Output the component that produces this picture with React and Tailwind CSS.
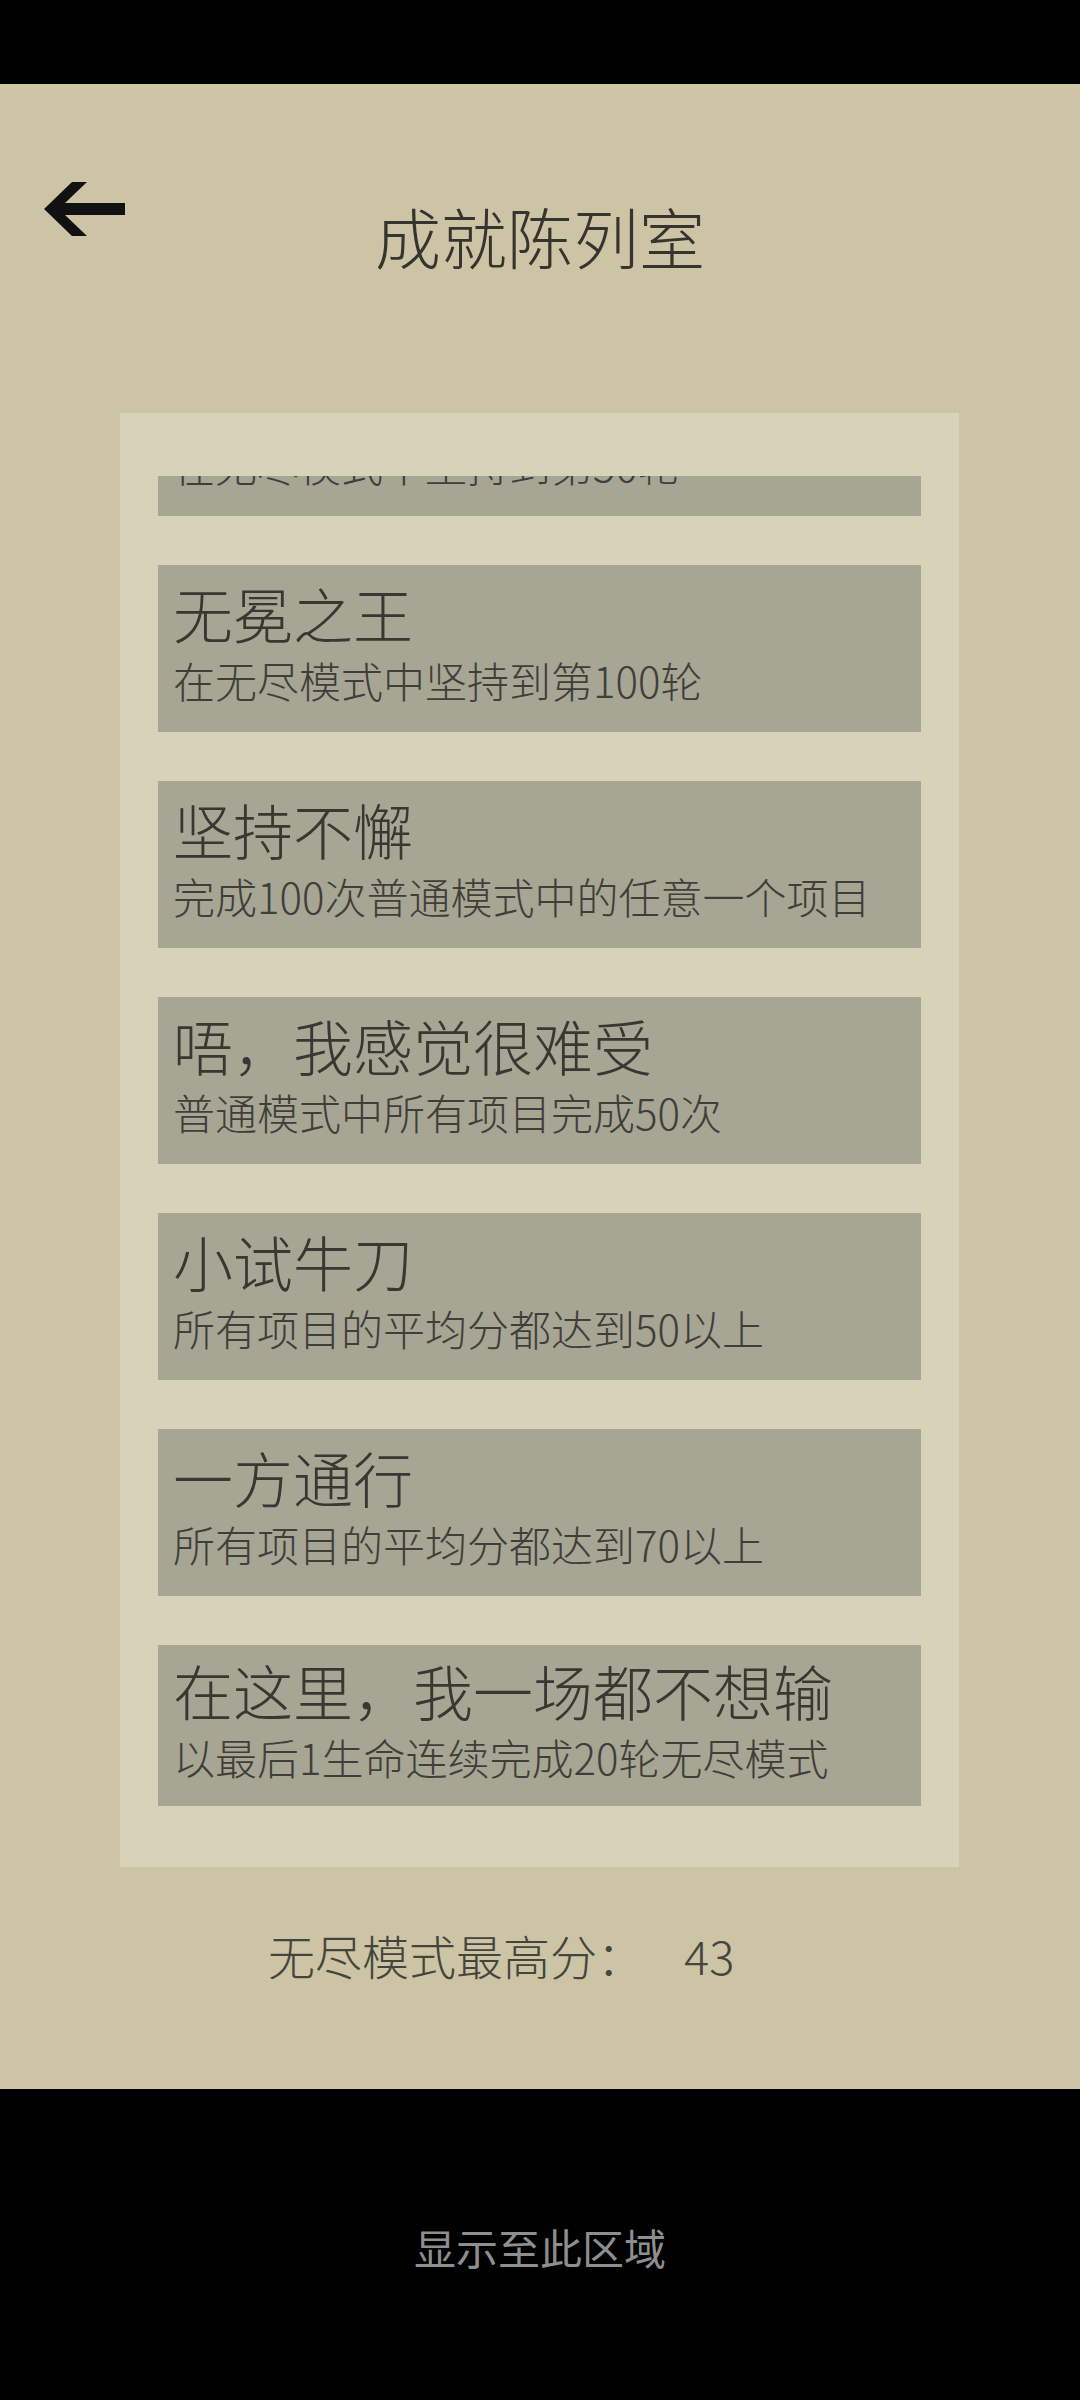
import React from 'react';

const achievements = [
  { title: '坚持到底', desc: '在无尽模式中坚持到第50轮' },
  { title: '无冕之王', desc: '在无尽模式中坚持到第100轮' },
  { title: '坚持不懈', desc: '完成100次普通模式中的任意一个项目' },
  { title: '唔，我感觉很难受', desc: '普通模式中所有项目完成50次' },
  { title: '小试牛刀', desc: '所有项目的平均分都达到50以上' },
  { title: '一方通行', desc: '所有项目的平均分都达到70以上' },
  { title: '在这里，我一场都不想输', desc: '以最后1生命连续完成20轮无尽模式' },
];

const font = { fontFamily: '"Noto Sans CJK SC", "Noto Sans", sans-serif' };

function BackArrow() {
  return (
    <svg width="82" height="54" viewBox="0 0 82 54" className="ml-[43px]">
      <polygon points="1,27 29,0 44,0 22,21 82,21 82,33 22,33 44,54 29,54" fill="#111111" />
    </svg>
  );
}

function AchievementCard({ item, first, last }) {
  return (
    <div
      className={
        'flex flex-col bg-[#a7a594] pl-[15px] ' +
        (first ? 'mt-[-127px] ' : '') +
        (last ? 'pt-[15px] pb-[28px] gap-[16px]' : 'pt-[18px] pb-[31px] gap-[16px]')
      }
    >
      <p className="text-[60px] leading-none font-light text-[#383732] whitespace-nowrap">{item.title}</p>
      <p className="text-[42px] leading-none font-light text-[#3f3e39] whitespace-nowrap">{item.desc}</p>
    </div>
  );
}

export default function App() {
  return (
    <div className="w-[1080px] h-[2400px] flex flex-col bg-black" style={font}>
      {/* status bar */}
      <div className="h-[84px] bg-black" />

      {/* main screen */}
      <div className="h-[2005px] bg-[#ccc4a5] flex flex-col pt-[98px]">
        <div className="grid grid-cols-[140px_1fr_140px] items-start">
          <BackArrow />
          <h1 className="mt-[20px] text-[66px] leading-none font-light text-[#35342f] text-center">成就陈列室</h1>
          <div />
        </div>

        {/* achievement panel */}
        <div className="mt-[145px] ml-[120px] w-[839px] bg-[#d8d2b9] pt-[63px] pb-[61px]">
          <div className="overflow-hidden px-[38px]">
            <div className="flex flex-col gap-[49px]">
              {achievements.map((a, i) => (
                <AchievementCard key={i} item={a} first={i === 0} last={i === achievements.length - 1} />
              ))}
            </div>
          </div>
        </div>

        <div className="mt-[64px] pl-[268px] flex items-center text-[47px] leading-none font-light text-[#45443d]">
          <span>无尽模式最高分：</span>
          <span className="ml-[40px]">43</span>
        </div>
      </div>

      {/* bottom hint */}
      <div className="flex-1 bg-black flex justify-center pt-[137px]">
        <p className="text-[42px] leading-none text-[#8e8e8e]">显示至此区域</p>
      </div>
    </div>
  );
}
